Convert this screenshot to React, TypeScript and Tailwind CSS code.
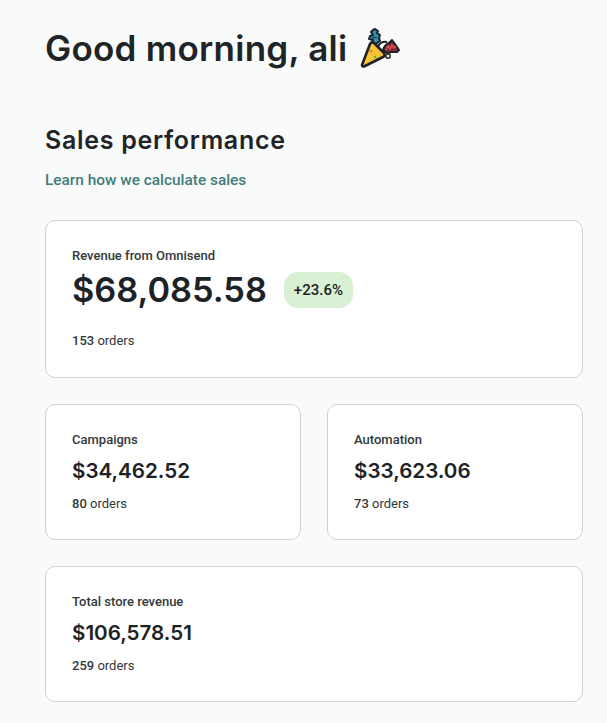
const heading = { fontFamily: 'Inter, sans-serif' }

function PartyIcon() {
  return (
    <svg width="44" height="46" viewBox="0 0 44 46" fill="none" className="shrink-0">
      {/* maroon streamer */}
      <path d="M19 22c1-4 5-6 9-5" stroke="#1c2226" strokeWidth="2" fill="none" />
      <path d="M24 25c1-3 3-6 6-7l3-3 3 4 4 6-2 2-6 0-3 1-3-1z" fill="#7d2a3c" stroke="#1c2226" strokeWidth="2" strokeLinejoin="round" />
      <path d="M27 25l2-4 2 3 2-4 2 3 2-2" stroke="#e5534b" strokeWidth="1.4" fill="none" />
      {/* blue curl */}
      <path d="M16 4l3 2-1 2 3 2-1 3 1 3-3 2-2 2-3-2 1-3-4-1 1-3 3-1-2-3 2-2z" fill="#2f8fb0" stroke="#1c2226" strokeWidth="2" strokeLinejoin="round" />
      <path d="M13 13c2-1 3-1 5 0" stroke="#173f4d" strokeWidth="1.2" />
      {/* cone */}
      <path d="M3 40l8-21c1-2 3-2 4-1l10 10c1 2 1 3-1 4l-18 9c-2 1-3 0-3-1z" fill="#f7c533" stroke="#1c2226" strokeWidth="2.6" strokeLinejoin="round" />
      <circle cx="12" cy="26" r="1.3" fill="#e5793b" />
      <circle cx="16" cy="32" r="1.3" fill="#6aa84f" />
      <circle cx="29" cy="31" r="2.2" fill="#f7e7a0" stroke="#1c2226" strokeWidth="1.4" />
    </svg>
  )
}

function StatCard({ label, value, orders }: { label: string; value: string; orders: number }) {
  return (
    <div className="h-[136px] rounded-[10px] border border-[#cfd3d3] bg-white px-[26px] pt-[26px]">
      <p className="text-[13px] leading-[18px] font-medium text-[#33383a]">{label}</p>
      <p style={heading} className="mt-[7px] text-[20.6px] leading-[30px] font-semibold text-[#1c2226]">{value}</p>
      <p className="mt-[9px] text-[13px] leading-[18px] text-[#33383a]">
        <span className="font-medium">{orders}</span> orders
      </p>
    </div>
  )
}

export default function App() {
  return (
    <div className="min-h-[723px] bg-[#f9fafa] pl-[45px] pr-[24px] pt-[24px]" style={{ fontFamily: 'Roboto, sans-serif' }}>
      {/* Greeting */}
      <div className="flex h-[48px] items-center gap-[12px]">
        <h1 style={heading} className="text-[35px] leading-[48px] font-semibold tracking-[0.25px] text-[#1f2426]">Good morning, ali</h1>
        <PartyIcon />
      </div>

      {/* Section header */}
      <h2 style={heading} className="mt-[50px] text-[25px] leading-[36px] font-semibold tracking-[0.7px] text-[#1f2426]">Sales performance</h2>
      <a className="mt-[11px] block text-[15.4px] leading-[22px] font-medium text-[#3f7d7b]">Learn how we calculate sales</a>

      {/* Main card */}
      <div className="mt-[29px] h-[158px] rounded-[10px] border border-[#cfd3d3] bg-white px-[26px] pt-[26px]">
        <p className="text-[13px] leading-[18px] font-medium text-[#33383a]">Revenue from Omnisend</p>
        <div className="mt-[4px] flex h-[42px] items-center gap-[17px]">
          <span style={heading} className="text-[34.3px] leading-[42px] font-semibold text-[#1c2226]">$68,085.58</span>
          <span className="flex h-[36px] w-[69px] items-center justify-center rounded-[14px] bg-[#d9f0d5] text-[15px] font-medium text-[#1c2226]">+23.6%</span>
        </div>
        <p className="mt-[21px] text-[13px] leading-[18px] text-[#33383a]">
          <span className="font-medium">153</span> orders
        </p>
      </div>

      <div className="mt-[26px] grid grid-cols-[256px_1fr] gap-[26px]">
        <StatCard label="Campaigns" value="$34,462.52" orders={80} />
        <StatCard label="Automation" value="$33,623.06" orders={73} />
      </div>

      <div className="mt-[26px]">
        <StatCard label="Total store revenue" value="$106,578.51" orders={259} />
      </div>
    </div>
  )
}
